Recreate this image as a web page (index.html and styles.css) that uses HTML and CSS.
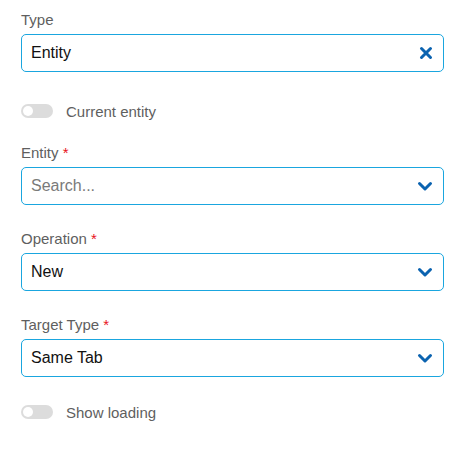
FILE: index.html
```html
<!DOCTYPE html>
<html lang="en">
<head>
  <meta charset="UTF-8">
  <meta name="viewport" content="width=device-width, initial-scale=1.0">
  <title>Navigation settings</title>
  <link rel="stylesheet" href="styles.css">
</head>
<body>
  <form class="panel">
    <div class="field">
      <label class="label">Type</label>
      <div class="box">
        <span class="value">Entity</span>
        <svg class="icon" width="14" height="14" viewBox="0 0 14 14">
          <path d="M2.5 2.5 L11.5 11.5 M11.5 2.5 L2.5 11.5" stroke="#0b63b0" stroke-width="3" stroke-linecap="round" fill="none"/>
        </svg>
      </div>
    </div>

    <div class="switch-row">
      <span class="switch"><span class="knob"></span></span>
      <span class="switch-text">Current entity</span>
    </div>

    <div class="field">
      <label class="label">Entity <span class="req">*</span></label>
      <div class="box">
        <span class="value placeholder">Search...</span>
        <svg class="icon" width="16" height="12" viewBox="0 0 16 12">
          <path d="M2.5 3.5 L8 9 L13.5 3.5" stroke="#0b63b0" stroke-width="3" stroke-linecap="round" stroke-linejoin="round" fill="none"/>
        </svg>
      </div>
    </div>

    <div class="field">
      <label class="label">Operation <span class="req">*</span></label>
      <div class="box">
        <span class="value">New</span>
        <svg class="icon" width="16" height="12" viewBox="0 0 16 12">
          <path d="M2.5 3.5 L8 9 L13.5 3.5" stroke="#0b63b0" stroke-width="3" stroke-linecap="round" stroke-linejoin="round" fill="none"/>
        </svg>
      </div>
    </div>

    <div class="field">
      <label class="label">Target Type <span class="req">*</span></label>
      <div class="box">
        <span class="value">Same Tab</span>
        <svg class="icon" width="16" height="12" viewBox="0 0 16 12">
          <path d="M2.5 3.5 L8 9 L13.5 3.5" stroke="#0b63b0" stroke-width="3" stroke-linecap="round" stroke-linejoin="round" fill="none"/>
        </svg>
      </div>
    </div>

    <div class="switch-row">
      <span class="switch"><span class="knob"></span></span>
      <span class="switch-text">Show loading</span>
    </div>
  </form>
</body>
</html>
```

FILE: styles.css
```css
body {
  margin: 0;
  background: #fff;
  font-family: "Liberation Sans", Arial, sans-serif;
}
.panel {
  display: flex;
  flex-direction: column;
  padding: 10px 19px 0 21px;
}
.field { margin-bottom: 24px; }
.label {
  display: block;
  font-size: 15px;
  line-height: 20px;
  color: #5f5f5f;
  margin-bottom: 4px;
}
.req { color: #e8141c; }
.box {
  display: flex;
  align-items: center;
  justify-content: space-between;
  height: 38px;
  box-sizing: border-box;
  border: 1px solid #1aa6df;
  border-radius: 5px;
  padding: 0 10px 0 9px;
}
.value {
  font-size: 16px;
  color: #111;
}
.placeholder { color: #7a7a7a; }
.icon { flex: none; }
.switch-row {
  display: flex;
  align-items: center;
  gap: 13px;
  height: 24px;
  margin: 3px 0 20px;
}
.switch-row:last-child { margin-top: -1px; }
.switch {
  width: 32px;
  height: 14px;
  border-radius: 7px;
  background: #dcdcdc;
  padding: 2px;
  box-sizing: border-box;
}
.knob {
  display: block;
  width: 10px;
  height: 10px;
  border-radius: 50%;
  background: #fff;
}
.switch-text {
  font-size: 15px;
  color: #5f5f5f;
}
```
